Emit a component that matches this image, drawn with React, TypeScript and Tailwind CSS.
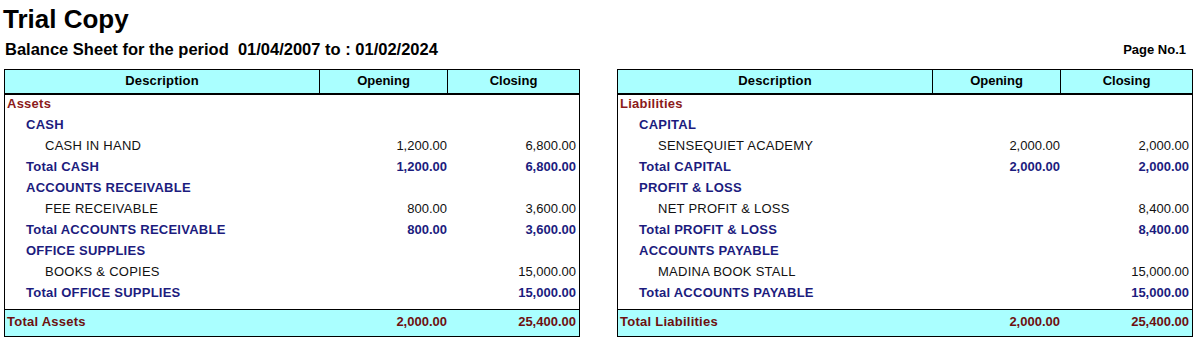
import React from "react";

type Row = {
  kind: "section" | "group" | "item" | "total";
  label: string;
  opening?: string;
  closing?: string;
};

type Side = {
  rows: Row[];
  footer: { label: string; opening: string; closing: string };
};

const assets: Side = {
  rows: [
    { kind: "section", label: "Assets" },
    { kind: "group", label: "CASH" },
    { kind: "item", label: "CASH IN HAND", opening: "1,200.00", closing: "6,800.00" },
    { kind: "total", label: "Total CASH", opening: "1,200.00", closing: "6,800.00" },
    { kind: "group", label: "ACCOUNTS RECEIVABLE" },
    { kind: "item", label: "FEE RECEIVABLE", opening: "800.00", closing: "3,600.00" },
    { kind: "total", label: "Total ACCOUNTS RECEIVABLE", opening: "800.00", closing: "3,600.00" },
    { kind: "group", label: "OFFICE SUPPLIES" },
    { kind: "item", label: "BOOKS & COPIES", closing: "15,000.00" },
    { kind: "total", label: "Total OFFICE SUPPLIES", closing: "15,000.00" },
  ],
  footer: { label: "Total Assets", opening: "2,000.00", closing: "25,400.00" },
};

const liabilities: Side = {
  rows: [
    { kind: "section", label: "Liabilities" },
    { kind: "group", label: "CAPITAL" },
    { kind: "item", label: "SENSEQUIET ACADEMY", opening: "2,000.00", closing: "2,000.00" },
    { kind: "total", label: "Total CAPITAL", opening: "2,000.00", closing: "2,000.00" },
    { kind: "group", label: "PROFIT & LOSS" },
    { kind: "item", label: "NET PROFIT & LOSS", closing: "8,400.00" },
    { kind: "total", label: "Total PROFIT & LOSS", closing: "8,400.00" },
    { kind: "group", label: "ACCOUNTS PAYABLE" },
    { kind: "item", label: "MADINA BOOK STALL", closing: "15,000.00" },
    { kind: "total", label: "Total ACCOUNTS PAYABLE", closing: "15,000.00" },
  ],
  footer: { label: "Total Liabilities", opening: "2,000.00", closing: "25,400.00" },
};

const rowStyle: Record<Row["kind"], string> = {
  section: "pl-[2px] font-bold text-[#8b1a1a]",
  group: "pl-[21px] font-bold text-[#1c1c7e]",
  item: "pl-[40px] text-[#111111]",
  total: "pl-[21px] font-bold text-[#1c1c7e]",
};

function Sheet({ side }: { side: Side }) {
  return (
    <div className="flex w-[576px] flex-col border border-black">
      <div className="flex h-[25px] items-center border-b-2 border-black bg-[#aaffff] font-bold text-black">
        <div className="flex h-full flex-1 items-center justify-center border-r border-black pb-[2px] tracking-[0.2px]">
          Description
        </div>
        <div className="flex h-full w-[128px] items-center justify-center border-r border-black pb-[2px]">
          Opening
        </div>
        <div className="flex h-full w-[131px] items-center justify-center pb-[2px]">
          Closing
        </div>
      </div>
      <div className="flex h-[214px] flex-col">
        {side.rows.map((r, i) => (
          <div key={i} className={`flex h-[21px] items-center pb-[4px] ${rowStyle[r.kind]}`}>
            <div className="flex-1 tracking-[0.25px]">{r.label}</div>
            <div className="w-[128px] pr-px text-right">{r.opening ?? ""}</div>
            <div className="w-[131px] pr-[3px] text-right">{r.closing ?? ""}</div>
          </div>
        ))}
      </div>
      <div className="flex h-[27px] items-center border-t border-black bg-[#aaffff] pb-[3px] font-bold text-[#6e1010]">
        <div className="flex-1 pl-[2px] tracking-[0.25px]">{side.footer.label}</div>
        <div className="w-[128px] pr-px text-right">{side.footer.opening}</div>
        <div className="w-[131px] pr-[3px] text-right">{side.footer.closing}</div>
      </div>
    </div>
  );
}

export default function App() {
  return (
    <div className="h-[342px] w-[1197px] bg-white font-['Liberation_Sans',Arial,sans-serif] text-[13px] text-black">
      <div className="pl-[3px] pt-[4px] text-[26px] font-bold leading-[30px]">Trial Copy</div>
      <div className="flex items-end justify-between pl-[5px] pr-[11px] pt-[6px] font-bold">
        <div className="whitespace-pre text-[16.5px] leading-[18px]">
          Balance Sheet for the period  01/04/2007 to : 01/02/2024
        </div>
        <div className="text-[13px] leading-[16px]">Page No.1</div>
      </div>
      <div className="mt-[11px] flex gap-[37px] px-[4px]">
        <Sheet side={assets} />
        <Sheet side={liabilities} />
      </div>
    </div>
  );
}
